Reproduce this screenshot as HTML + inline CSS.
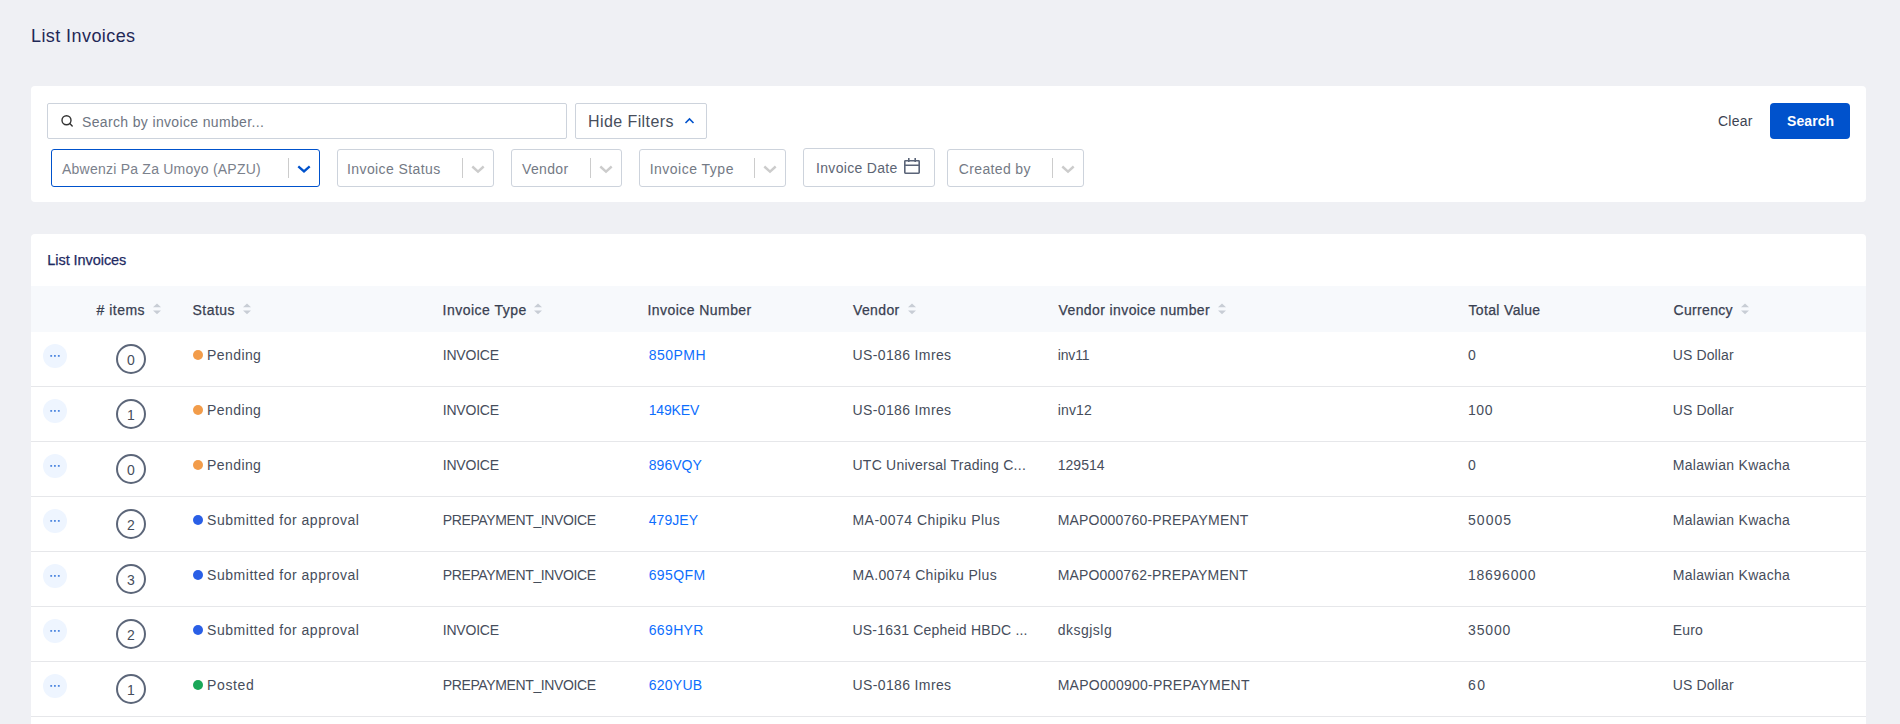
<!DOCTYPE html>
<html>
<head>
<meta charset="utf-8">
<style>
*{box-sizing:border-box;margin:0;padding:0}
html,body{width:1900px;height:724px;overflow:hidden}
body{background:#eff0f4;font-family:"Liberation Sans",sans-serif;position:relative;color:#3d4352}
.a{position:absolute;white-space:nowrap}
.card{position:absolute;left:31px;width:1835px;background:#fff;border-radius:4px}
.inp{position:absolute;border:1px solid #cdd3dc;border-radius:2px;background:#fff}
.f14{font-size:14px;line-height:20px}
.sel{position:absolute;top:149px;height:38px;border:1px solid #cdd3dc;border-radius:3px;background:#fff}
.sel .t{position:absolute;top:9px;font-size:14px;line-height:20px;color:#747a85;white-space:nowrap}
.sel .sep{position:absolute;right:30px;top:8px;width:1px;height:20px;background:#cccccc}
.sel svg{position:absolute;right:8px;top:15px}
.hdr{position:absolute;left:31px;top:286px;width:1835px;height:46px;background:#f7f9fc}
.th{position:absolute;top:300px;font-size:14px;line-height:20px;font-weight:400;-webkit-text-stroke:0.25px #394051;color:#394051;white-space:nowrap}
.sort{position:absolute;top:303px}
.row{position:absolute;left:31px;width:1835px;height:55px;border-bottom:1px solid #e6e7ea}
.td{position:absolute;top:13px;font-size:14px;line-height:20px;color:#464d5b;white-space:nowrap}
.lnk{color:#0d6efd}
.dots{position:absolute;left:12px;top:12px;width:24px;height:24px;border-radius:50%;background:#eef5ff}
.dots i{position:absolute;top:11px;width:2px;height:2px;background:#5b8fe0}
.cnt{position:absolute;left:85px;top:12px;width:30px;height:30px;border:2px solid #5c6679;border-radius:50%;font-size:14px;line-height:20px;text-align:center;color:#464d5b;padding-top:4px}
.dot{position:absolute;left:162px;top:18px;width:10px;height:10px;border-radius:50%}
</style>
</head>
<body>
<div class="a" style="left:31px;top:26px;font-size:18px;line-height:20px;color:#1f2857;letter-spacing:0.42px">List Invoices</div>
<div class="card" style="top:86px;height:116px"></div>
<div class="inp" style="left:47px;top:103px;width:520px;height:36px"></div>
<svg class="a" style="left:60px;top:114px" width="14" height="14" viewBox="0 0 14 14"><circle cx="6.5" cy="6.3" r="4.5" fill="none" stroke="#333" stroke-width="1.4"/><path d="M9.8 9.6 L12.2 12" stroke="#333" stroke-width="1.4" stroke-linecap="round"/></svg>
<div class="a f14" style="left:82px;top:112px;color:#6e7582;letter-spacing:0.35px">Search by invoice number...</div>
<div class="inp" style="left:575px;top:103px;width:132px;height:36px"></div>
<div class="a" style="left:588px;top:112px;font-size:16px;line-height:20px;color:#474e5c;letter-spacing:0.42px">Hide Filters</div>
<svg class="a" style="left:684px;top:117px" width="11" height="8" viewBox="0 0 11 8"><path d="M1.5 6 L5.5 2 L9.5 6" fill="none" stroke="#0052cc" stroke-width="1.6"/></svg>
<div class="a f14" style="left:1718px;top:111px;color:#3d4352;letter-spacing:0.25px">Clear</div>
<div class="a" style="left:1770px;top:103px;width:80px;height:36px;background:#0052cc;border-radius:4px"></div>
<div class="a f14" style="left:1787px;top:111px;color:#fff;font-weight:700;letter-spacing:0.08px">Search</div>
<div class="sel" style="left:51px;width:269px;border:1px solid #0052cc"><div class="t" style="left:10px;top:9px;color:#7b818c;letter-spacing:0.23px">Abwenzi Pa Za Umoyo (APZU)</div><div class="sep" style="right:30px;top:8px"></div><svg style="right:8px;top:15px" width="14" height="9" viewBox="0 0 14 9"><path d="M1.3 1.3 L7 6.4 L12.7 1.3" fill="none" stroke="#0052cc" stroke-width="2.3"/></svg></div>
<div class="sel" style="left:337px;width:157px"><div class="t" style="left:9px;letter-spacing:0.41px">Invoice Status</div><div class="sep"></div><svg width="14" height="9" viewBox="0 0 14 9"><path d="M1.3 1.5 L7 6.6 L12.7 1.5" fill="none" stroke="#cccccc" stroke-width="2.4"/></svg></div>
<div class="sel" style="left:511px;width:111px"><div class="t" style="left:10px;letter-spacing:0.36px">Vendor</div><div class="sep"></div><svg width="14" height="9" viewBox="0 0 14 9"><path d="M1.3 1.5 L7 6.6 L12.7 1.5" fill="none" stroke="#cccccc" stroke-width="2.4"/></svg></div>
<div class="sel" style="left:639px;width:147px"><div class="t" style="left:9.7px;letter-spacing:0.49px">Invoice Type</div><div class="sep"></div><svg width="14" height="9" viewBox="0 0 14 9"><path d="M1.3 1.5 L7 6.6 L12.7 1.5" fill="none" stroke="#cccccc" stroke-width="2.4"/></svg></div>
<div class="sel" style="left:947px;width:137px"><div class="t" style="left:10.8px;letter-spacing:0.36px">Created by</div><div class="sep"></div><svg width="14" height="9" viewBox="0 0 14 9"><path d="M1.3 1.5 L7 6.6 L12.7 1.5" fill="none" stroke="#cccccc" stroke-width="2.4"/></svg></div>
<div class="sel" style="left:803px;top:148px;width:132px;height:39px"><div class="t" style="left:12px;top:9px;color:#5d6574;letter-spacing:0.32px">Invoice Date</div><svg style="left:99px;top:8px" width="18" height="18" viewBox="0 0 18 18"><rect x="1.8" y="3.8" width="14.4" height="12.4" rx="0.6" fill="none" stroke="#5a6478" stroke-width="1.6"/><path d="M1.8 8.3 H16.2 M5.8 1 V5 M12.2 1 V5" stroke="#5a6478" stroke-width="1.6"/></svg></div>
<div class="card" style="top:234px;height:520px"></div>
<div class="a" style="left:47.3px;top:250px;font-size:14.5px;line-height:20px;letter-spacing:-0.06px;color:#1e2a62;-webkit-text-stroke:0.25px #1e2a62">List Invoices</div>
<div class="hdr"></div>
<div class="th" style="left:96.5px;letter-spacing:0.5px"># items</div>
<svg class="sort" style="left:153px" width="8" height="12" viewBox="0 0 8 12"><path d="M4 0.5 L8 4.3 H0 Z M4 11.2 L8 7.4 H0 Z" fill="#c8cdd5"/></svg>
<div class="th" style="left:192.5px;letter-spacing:0.48px">Status</div>
<svg class="sort" style="left:243px" width="8" height="12" viewBox="0 0 8 12"><path d="M4 0.5 L8 4.3 H0 Z M4 11.2 L8 7.4 H0 Z" fill="#c8cdd5"/></svg>
<div class="th" style="left:442.5px;letter-spacing:0.5px">Invoice Type</div>
<svg class="sort" style="left:534px" width="8" height="12" viewBox="0 0 8 12"><path d="M4 0.5 L8 4.3 H0 Z M4 11.2 L8 7.4 H0 Z" fill="#c8cdd5"/></svg>
<div class="th" style="left:647.5px;letter-spacing:0.44px">Invoice Number</div>
<div class="th" style="left:853px;letter-spacing:0.38px">Vendor</div>
<svg class="sort" style="left:908px" width="8" height="12" viewBox="0 0 8 12"><path d="M4 0.5 L8 4.3 H0 Z M4 11.2 L8 7.4 H0 Z" fill="#c8cdd5"/></svg>
<div class="th" style="left:1058.5px;letter-spacing:0.4px">Vendor invoice number</div>
<svg class="sort" style="left:1218px" width="8" height="12" viewBox="0 0 8 12"><path d="M4 0.5 L8 4.3 H0 Z M4 11.2 L8 7.4 H0 Z" fill="#c8cdd5"/></svg>
<div class="th" style="left:1468.5px;letter-spacing:0.34px">Total Value</div>
<div class="th" style="left:1673.5px;letter-spacing:0.33px">Currency</div>
<svg class="sort" style="left:1741px" width="8" height="12" viewBox="0 0 8 12"><path d="M4 0.5 L8 4.3 H0 Z M4 11.2 L8 7.4 H0 Z" fill="#c8cdd5"/></svg>
<div class="row" style="top:332px"><div class="dots"><svg width="24" height="24" viewBox="0 0 24 24" style="position:absolute;left:0;top:0"><rect x="7.3" y="11" width="1.8" height="1.8" fill="#4f88e0"/><rect x="11.0" y="11" width="1.8" height="1.8" fill="#4f88e0"/><rect x="14.9" y="11" width="1.8" height="1.8" fill="#4f88e0"/></svg></div><div class="cnt">0</div><div class="dot" style="background:#f29c4a"></div><div class="td" style="left:176.1px;letter-spacing:0.4px">Pending</div><div class="td" style="left:411.8px;letter-spacing:-0.22px">INVOICE</div><div class="td lnk" style="left:617.7px;letter-spacing:0.48px">850PMH</div><div class="td" style="left:821.5px;letter-spacing:0.37px">US-0186 Imres</div><div class="td" style="left:1026.7px;letter-spacing:-0.15px">inv11</div><div class="td" style="left:1437.0px;letter-spacing:0px">0</div><div class="td" style="left:1641.8px;letter-spacing:0.11px">US Dollar</div></div>
<div class="row" style="top:387px"><div class="dots"><svg width="24" height="24" viewBox="0 0 24 24" style="position:absolute;left:0;top:0"><rect x="7.3" y="11" width="1.8" height="1.8" fill="#4f88e0"/><rect x="11.0" y="11" width="1.8" height="1.8" fill="#4f88e0"/><rect x="14.9" y="11" width="1.8" height="1.8" fill="#4f88e0"/></svg></div><div class="cnt">1</div><div class="dot" style="background:#f29c4a"></div><div class="td" style="left:176.1px;letter-spacing:0.4px">Pending</div><div class="td" style="left:411.8px;letter-spacing:-0.22px">INVOICE</div><div class="td lnk" style="left:617.7px;letter-spacing:-0.16px">149KEV</div><div class="td" style="left:821.5px;letter-spacing:0.37px">US-0186 Imres</div><div class="td" style="left:1026.7px;letter-spacing:0.15px">inv12</div><div class="td" style="left:1437.0px;letter-spacing:0.55px">100</div><div class="td" style="left:1641.8px;letter-spacing:0.11px">US Dollar</div></div>
<div class="row" style="top:442px"><div class="dots"><svg width="24" height="24" viewBox="0 0 24 24" style="position:absolute;left:0;top:0"><rect x="7.3" y="11" width="1.8" height="1.8" fill="#4f88e0"/><rect x="11.0" y="11" width="1.8" height="1.8" fill="#4f88e0"/><rect x="14.9" y="11" width="1.8" height="1.8" fill="#4f88e0"/></svg></div><div class="cnt">0</div><div class="dot" style="background:#f29c4a"></div><div class="td" style="left:176.1px;letter-spacing:0.4px">Pending</div><div class="td" style="left:411.8px;letter-spacing:-0.22px">INVOICE</div><div class="td lnk" style="left:617.7px;letter-spacing:0.06px">896VQY</div><div class="td" style="left:821.5px;letter-spacing:0.24px">UTC Universal Trading C...</div><div class="td" style="left:1026.7px;letter-spacing:0.04px">129514</div><div class="td" style="left:1437.0px;letter-spacing:0px">0</div><div class="td" style="left:1641.8px;letter-spacing:0.3px">Malawian Kwacha</div></div>
<div class="row" style="top:497px"><div class="dots"><svg width="24" height="24" viewBox="0 0 24 24" style="position:absolute;left:0;top:0"><rect x="7.3" y="11" width="1.8" height="1.8" fill="#4f88e0"/><rect x="11.0" y="11" width="1.8" height="1.8" fill="#4f88e0"/><rect x="14.9" y="11" width="1.8" height="1.8" fill="#4f88e0"/></svg></div><div class="cnt">2</div><div class="dot" style="background:#2a5fe6"></div><div class="td" style="left:176.1px;letter-spacing:0.52px">Submitted for approval</div><div class="td" style="left:411.8px;letter-spacing:-0.38px">PREPAYMENT_INVOICE</div><div class="td lnk" style="left:617.7px;letter-spacing:0.08px">479JEY</div><div class="td" style="left:821.5px;letter-spacing:0.46px">MA-0074 Chipiku Plus</div><div class="td" style="left:1026.7px;letter-spacing:0.18px">MAPO000760-PREPAYMENT</div><div class="td" style="left:1437.0px;letter-spacing:1.05px">50005</div><div class="td" style="left:1641.8px;letter-spacing:0.3px">Malawian Kwacha</div></div>
<div class="row" style="top:552px"><div class="dots"><svg width="24" height="24" viewBox="0 0 24 24" style="position:absolute;left:0;top:0"><rect x="7.3" y="11" width="1.8" height="1.8" fill="#4f88e0"/><rect x="11.0" y="11" width="1.8" height="1.8" fill="#4f88e0"/><rect x="14.9" y="11" width="1.8" height="1.8" fill="#4f88e0"/></svg></div><div class="cnt">3</div><div class="dot" style="background:#2a5fe6"></div><div class="td" style="left:176.1px;letter-spacing:0.52px">Submitted for approval</div><div class="td" style="left:411.8px;letter-spacing:-0.38px">PREPAYMENT_INVOICE</div><div class="td lnk" style="left:617.7px;letter-spacing:0.38px">695QFM</div><div class="td" style="left:821.5px;letter-spacing:0.34px">MA.0074 Chipiku Plus</div><div class="td" style="left:1026.7px;letter-spacing:0.15px">MAPO000762-PREPAYMENT</div><div class="td" style="left:1437.0px;letter-spacing:0.74px">18696000</div><div class="td" style="left:1641.8px;letter-spacing:0.3px">Malawian Kwacha</div></div>
<div class="row" style="top:607px"><div class="dots"><svg width="24" height="24" viewBox="0 0 24 24" style="position:absolute;left:0;top:0"><rect x="7.3" y="11" width="1.8" height="1.8" fill="#4f88e0"/><rect x="11.0" y="11" width="1.8" height="1.8" fill="#4f88e0"/><rect x="14.9" y="11" width="1.8" height="1.8" fill="#4f88e0"/></svg></div><div class="cnt">2</div><div class="dot" style="background:#2a5fe6"></div><div class="td" style="left:176.1px;letter-spacing:0.52px">Submitted for approval</div><div class="td" style="left:411.8px;letter-spacing:-0.22px">INVOICE</div><div class="td lnk" style="left:617.7px;letter-spacing:0.36px">669HYR</div><div class="td" style="left:821.5px;letter-spacing:0.2px">US-1631 Cepheid HBDC ...</div><div class="td" style="left:1026.7px;letter-spacing:0.5px">dksgjslg</div><div class="td" style="left:1437.0px;letter-spacing:0.85px">35000</div><div class="td" style="left:1641.8px;letter-spacing:0.13px">Euro</div></div>
<div class="row" style="top:662px"><div class="dots"><svg width="24" height="24" viewBox="0 0 24 24" style="position:absolute;left:0;top:0"><rect x="7.3" y="11" width="1.8" height="1.8" fill="#4f88e0"/><rect x="11.0" y="11" width="1.8" height="1.8" fill="#4f88e0"/><rect x="14.9" y="11" width="1.8" height="1.8" fill="#4f88e0"/></svg></div><div class="cnt">1</div><div class="dot" style="background:#1aa758"></div><div class="td" style="left:176.1px;letter-spacing:0.6px">Posted</div><div class="td" style="left:411.8px;letter-spacing:-0.38px">PREPAYMENT_INVOICE</div><div class="td lnk" style="left:617.7px;letter-spacing:0.26px">620YUB</div><div class="td" style="left:821.5px;letter-spacing:0.37px">US-0186 Imres</div><div class="td" style="left:1026.7px;letter-spacing:0.24px">MAPO000900-PREPAYMENT</div><div class="td" style="left:1437.0px;letter-spacing:1.4px">60</div><div class="td" style="left:1641.8px;letter-spacing:0.11px">US Dollar</div></div>
<div class="row" style="top:717px;border-bottom:none"></div>
</body>
</html>
